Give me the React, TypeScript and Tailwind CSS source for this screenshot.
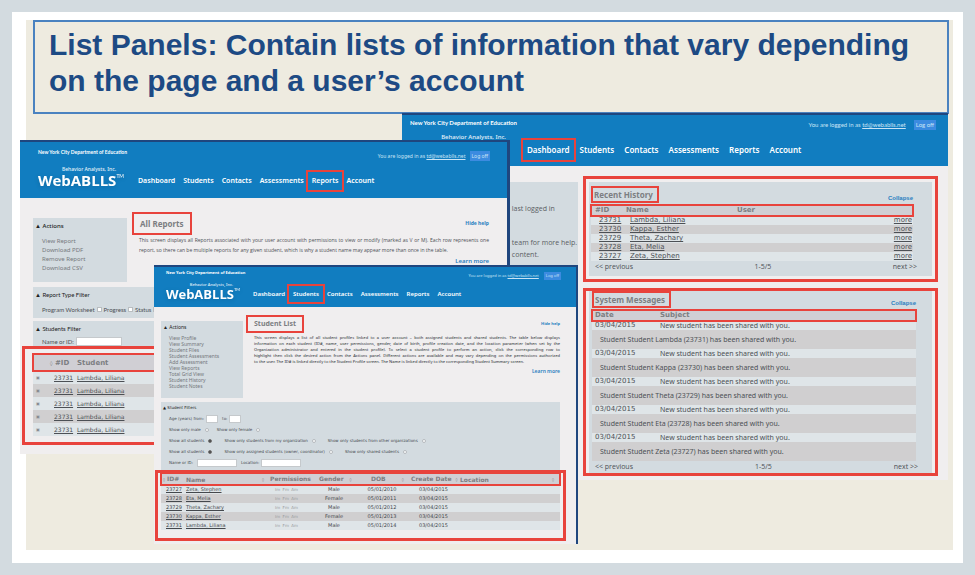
import React from "react";

type HeaderStyle = {
  bar: string;
  org: string;
  login: string;
  logoff: string;
  tagline: string;
  logo: string;
  tm: string;
  brand: string;
  nav: string;
  highlight: string;
};

const NAV = ["Dashboard", "Students", "Contacts", "Assessments", "Reports", "Account"];

function AppHeader({ active, s, showLogo = true }: { active: string; s: HeaderStyle; showLogo?: boolean }) {
  return (
    <header className={"flex flex-col bg-[#117dc0] text-white " + s.bar}>
      <div className="flex items-start justify-between">
        <span className={"font-bold " + s.org}>New York City Department of Education</span>
        <span className={"flex items-center text-[#c9e4f5] " + s.login}>
          <span>
            You are logged in as{" "}
            <a href="#account" className="underline">
              td@webablls.net
            </a>
          </span>
          <button className={"bg-[#3c8be0] " + s.logoff}>Log off</button>
        </span>
      </div>
      <div className="flex flex-1 items-end">
        <div className={"flex flex-col items-end " + s.brand}>
          <span className={"font-['Noto_Sans',sans-serif] font-medium text-[#e3f0f9] " + s.tagline}>Behavior Analysts, Inc.</span>
          {showLogo && (
            <span className={"flex items-start drop-shadow-sm " + s.logo}>
              <b className="font-['Open_Sans',sans-serif] font-bold">WebABLLS</b>
              <sup className={"top-0 font-['Lato',sans-serif] " + s.tm}>TM</sup>
            </span>
          )}
        </div>
        <nav className={"flex items-center font-['Noto_Sans',sans-serif] font-semibold " + s.nav}>
          {NAV.map((n) => (
            <a key={n} href={"#" + n} className={n === active ? "outline-2 outline-[#e8433c] " + s.highlight : ""}>
              {n}
            </a>
          ))}
        </nav>
      </div>
    </header>
  );
}

const dashHeader: HeaderStyle = {
  bar: "h-[53px] border-t-2 border-[#1f467e] pl-2 pr-3",
  org: "pt-1 font-['Lato',sans-serif] text-[6px] leading-[8px]",
  login: "gap-2 pt-[5px] font-['Lato',sans-serif] text-[6px] leading-[10px]",
  logoff: "px-[2px]",
  tagline: "text-[6px] leading-[8px]",
  logo: "text-[16px] leading-[18px]",
  tm: "text-[6px] leading-[8px]",
  brand: "w-[96px] self-start pt-[3px]",
  nav: "gap-[10px] pb-[10px] pl-[21px] text-[8px] leading-[12px]",
  highlight: "outline-offset-[4px]",
};

const reportsHeader: HeaderStyle = {
  bar: "h-[58px] border-t-2 border-[#1f467e] pl-[18px] pr-[17px]",
  org: "pt-[6px] font-['Lato',sans-serif] text-[5px] leading-[8px]",
  login: "gap-1 pt-[9px] font-['Noto_Sans',sans-serif] text-[5px] leading-[10px]",
  logoff: "px-[2px]",
  tagline: "pr-[8px] text-[5px] leading-[6px]",
  logo: "text-[15px] leading-[16px]",
  tm: "text-[5px] leading-[8px]",
  brand: "w-[86px] pb-[10px]",
  nav: "gap-2 pb-[12px] pl-[14px] text-[7px] leading-[10px]",
  highlight: "outline-offset-[4px]",
};

const studentsHeader: HeaderStyle = {
  bar: "h-[42px] border-t-2 border-[#1f467e] pl-3 pr-[15px]",
  org: "pt-[3px] font-['Noto_Sans',sans-serif] text-[4px] leading-[6px]",
  login: "gap-[5px] pt-[5px] font-['Noto_Sans',sans-serif] text-[4px] leading-[8px]",
  logoff: "px-[2px]",
  tagline: "pr-[7px] text-[4px] leading-[5px]",
  logo: "text-[13px] leading-[14px]",
  tm: "text-[4px] leading-[6px]",
  brand: "w-[74px] pb-[6px]",
  nav: "gap-2 pb-[9px] pl-[13px] text-[6px] leading-[8px]",
  highlight: "outline-offset-[4px]",
};

function Pager() {
  return (
    <div className="flex justify-between font-['Open_Sans',sans-serif] text-[7px] leading-[12px] text-[#4c5055]">
      <button>&lt;&lt; previous</button>
      <span>1-5/5</span>
      <button>next &gt;&gt;</button>
    </div>
  );
}

function PanelTitle({ children }: { children: React.ReactNode }) {
  return (
    <div className="flex items-end justify-between">
      <h2 className="border-2 border-[#e8433c] pr-1 pl-[1px] font-['Noto_Sans',sans-serif] text-[8px] leading-[13px] font-bold text-[#7c7e82]">
        {children}
      </h2>
      <button className="font-['Liberation_Sans',sans-serif] text-[6px] leading-[9px] font-bold text-[#2a7fc0]">Collapse</button>
    </div>
  );
}

const students = [
  ["23731", "Lambda, Liliana", "Lambda"],
  ["23730", "Kappa, Esther", "Kappa"],
  ["23729", "Theta, Zachary", "Theta"],
  ["23728", "Eta, Melia", "Eta"],
  ["23727", "Zeta, Stephen", "Zeta"],
];

function DashboardWindow() {
  return (
    <section className="absolute top-0 right-[5px] left-[376px] h-[367px] bg-[#f0eeef]">
      <AppHeader active="Dashboard" s={dashHeader} showLogo={false} />
      <div className="flex">
        <div className="mt-4 ml-4 h-[110px] w-[160px] bg-[#d3dbe0] pt-[21px] pl-[92px] font-['Open_Sans',sans-serif] text-[7px] leading-[12px] whitespace-nowrap text-[#5a5e63]">
          <p className="pb-[22px]">&nbsp;last logged in</p>
          <p>&nbsp;team for more help.</p>
          <p>&nbsp;content.</p>
        </div>
        <div className="mr-[10px] ml-auto flex w-[355px] flex-col gap-[6px] pt-[10px]">
          <div className="border-[3px] border-[#e8433c] p-[3px]">
            <div className="h-[94px] bg-[#d3dbe0] pt-1 pr-[19px] pl-[2px] font-['DejaVu_Sans',sans-serif]">
              <PanelTitle>Recent History</PanelTitle>
              <table className="mt-[2px] w-full table-fixed border-separate border-spacing-0 text-[7px] leading-[9px] text-[#4c5055]">
                <thead>
                  <tr className="bg-[#d0cfd4] text-left font-bold text-[#7c7e82] outline-2 -outline-offset-1 outline-[#e8433c]">
                    <th className="h-[11px] w-[35px] pl-1">#ID</th>
                    <th className="w-[111px]">Name</th>
                    <th>User</th>
                    <th className="w-[30px]"></th>
                  </tr>
                </thead>
                <tbody>
                  {students.map(([id, name]) => (
                    <tr key={id} className="odd:bg-[#dfe5e8] even:bg-[#d0cfd0]">
                      <td className="pl-2 underline">{id}</td>
                      <td className="pl-1 underline">{name}</td>
                      <td></td>
                      <td className="pr-[1px] text-right">
                        <a href={"#" + id} className="underline">
                          more
                        </a>
                      </td>
                    </tr>
                  ))}
                </tbody>
              </table>
              <div className="-mr-1 pl-1">
                <Pager />
              </div>
            </div>
          </div>
          <div className="border-[3px] border-[#e8433c] px-[3px]">
            <div className="h-[182px] bg-[#d3dbe0] pr-4 pl-[3px] font-['DejaVu_Sans',sans-serif]">
              <PanelTitle>System Messages</PanelTitle>
              <table className="mt-[2px] w-full table-fixed border-separate border-spacing-0 text-[7px] leading-[9px] text-[#4c5055]">
                <thead>
                  <tr className="bg-[#d0cfd4] text-left font-bold text-[#7c7e82] outline-2 -outline-offset-1 outline-[#e8433c]">
                    <th className="h-[11px] w-[68px] pl-[3px]">Date</th>
                    <th>Subject</th>
                  </tr>
                </thead>
                <tbody>
                  {students.map(([id, , last]) => (
                    <React.Fragment key={id}>
                      <tr className="bg-[#dfe5e8]">
                        <td className="pl-[3px]">03/04/2015</td>
                        <td className="font-['Noto_Sans',sans-serif]">New student has been shared with you.</td>
                      </tr>
                      <tr className="bg-[#d0cfd0]">
                        <td colSpan={2} className="h-[19px] pl-2 font-['Noto_Sans',sans-serif]">
                          Student Student {last} ({id}) has been shared with you.
                        </td>
                      </tr>
                    </React.Fragment>
                  ))}
                </tbody>
              </table>
              <div className="-mr-[2px] pl-[3px]">
                <Pager />
              </div>
            </div>
          </div>
        </div>
      </div>
    </section>
  );
}

function ReportsWindow() {
  return (
    <section className="absolute top-[27px] left-[-6px] h-[314px] w-[490px] border-r-[3px] border-[#1f467e] bg-[#f0eeef] font-['Noto_Sans',sans-serif] text-[6px] text-[#4c5055]">
      <AppHeader active="Reports" s={reportsHeader} />
      <div className="flex pr-[18px] pl-[13px]">
        <aside className="mt-5 h-[64px] w-[94px] bg-[#d3dbe0] pt-1">
          <h3 className="pl-[2px] leading-[9px] font-medium text-[#222]">▲ Actions</h3>
          <ul className="pt-[6px] pl-[9px] leading-[9px] text-[#75797d]">
            <li>View Report</li>
            <li>Download PDF</li>
            <li>Remove Report</li>
            <li>Download CSV</li>
          </ul>
        </aside>
        <div className="flex flex-1 flex-col pt-[14px] pl-[5px]">
          <div className="flex items-center justify-between">
            <h2 className="border-2 border-[#e8433c] px-[6px] text-[8px] leading-[19px] font-bold text-[#7c7e82]">All Reports</h2>
            <button className="text-[5px] font-bold text-[#2a7fc0]">Hide help</button>
          </div>
          <p className="pl-[7px] text-justify font-['Open_Sans',sans-serif] text-[5px] leading-[10px] font-medium">
            This screen displays all Reports associated with your user account with permissions to view or modify (marked as V or M). Each row
            represents one report, so there can be multiple reports for any given student, which is why a student name may appear more than once
            in the table.
          </p>
          <a href="#help" className="self-end text-[6px] leading-[12px] font-semibold text-[#2a7fc0]">
            Learn more
          </a>
        </div>
      </div>
      <div className="mx-[13px] mt-[5px] h-[31px] bg-[#d3dbe0] pt-[3px]">
        <h3 className="pl-[2px] font-['Lato',sans-serif] leading-[9px] text-[#222]">▲ Report Type Filter</h3>
        <div className="flex gap-[2px] pt-[6px] pl-[9px] font-['Lato',sans-serif] leading-[9px]">
          {["Program Worksheet", "Progress", "Status"].map((l) => (
            <label key={l} className="flex items-center gap-[2px]">
              {l}
              <input type="checkbox" className="size-[5px] appearance-none border border-[#b9bdc0] bg-white" />
            </label>
          ))}
        </div>
      </div>
      <div className="mx-[13px] mt-[3px] h-[25px] bg-[#d3dbe0] pt-[3px]">
        <h3 className="pl-[2px] font-['Lato',sans-serif] leading-[9px] text-[#222]">▲ Students Filter</h3>
        <label className="flex items-center gap-[2px] pt-[4px] pl-[9px] font-['Lato',sans-serif] leading-[9px]">
          Name or ID:
          <input className="h-[9px] w-[46px] border border-[#c5c9cc] bg-white" />
        </label>
      </div>
      <div className="ml-[2px] border-[3px] border-[#e8433c] pt-[5px] pb-[6px] pl-2 font-['DejaVu_Sans',sans-serif]">
        <table className="w-full table-fixed border-separate border-spacing-0 text-[6px] leading-[12px]">
          <thead>
            <tr className="bg-[#d0cfd4] text-left text-[7px] font-bold text-[#7c7e82] outline-2 -outline-offset-1 outline-[#e8433c]">
              <th className="h-[17px] w-[17px]"></th>
              <th className="w-[27px]">
                <span className="text-[5px]">◊</span> #ID
              </th>
              <th>Student</th>
            </tr>
          </thead>
          <tbody>
            {[0, 1, 2, 3, 4].map((i) => (
              <tr key={i} className="odd:bg-[#dfe5e8] even:bg-[#d0cfd0]">
                <td className="h-[13px] pl-[3px] text-[4px] text-[#85898d]">▣</td>
                <td className="pl-1 underline">23731</td>
                <td className="underline">Lambda, Liliana</td>
              </tr>
            ))}
          </tbody>
        </table>
      </div>
    </section>
  );
}

function Radio({ label, name, on = false }: { label: string; name: string; on?: boolean }) {
  return (
    <label className="flex items-center gap-1">
      {label}
      <input
        type="radio"
        name={name}
        defaultChecked={on}
        className="size-[4px] appearance-none rounded-full border border-[#b5b9bd] bg-white checked:border-[#777] checked:bg-[#444]"
      />
    </label>
  );
}

const roster = [
  ["23727", "Zeta, Stephen", "Male", "05/01/2010"],
  ["23728", "Eta, Melia", "Female", "05/01/2011"],
  ["23729", "Theta, Zachary", "Male", "05/01/2012"],
  ["23730", "Kappa, Esther", "Female", "05/01/2013"],
  ["23731", "Lambda, Liliana", "Male", "05/01/2014"],
];

const helpLines = [
  "This screen displays a list of all student profiles linked to a user account – both assigned students and shared students. The table below displays",
  "information on each student (ID#, name, user permissions, gender, date of birth, profile creation date, and the location parameter (when set by the",
  "Organization administrator and entered in the student profile). To select a student profile to perform an action, click the corresponding row to",
  "highlight then click the desired action from the Actions panel. Different actions are available and may vary depending on the permissions authorized",
];

const actions = [
  "View Profile",
  "View Summary",
  "Student Files",
  "Student Assessments",
  "Add Assessment",
  "View Reports",
  "Total Grid View",
  "Student History",
  "Student Notes",
];

function StudentsWindow() {
  return (
    <section className="absolute top-[152px] left-[128px] h-[279px] w-[424px] border-r-2 border-[#1f467e] bg-[#f0eeef] font-['DejaVu_Sans',sans-serif] text-[5px] text-[#44484d]">
      <AppHeader active="Students" s={studentsHeader} />
      <div className="flex pr-4 pl-[7px]">
        <aside className="mt-[14px] h-[77px] w-[82px] bg-[#d3dbe0] pt-[3px] font-['Noto_Sans',sans-serif]">
          <h3 className="pl-[2px] leading-[7px] text-[#222]">▲ Actions</h3>
          <ul className="pt-1 pl-2 leading-[6px] text-[#75797d]">
            {actions.map((a) => (
              <li key={a}>{a}</li>
            ))}
          </ul>
        </aside>
        <div className="flex flex-1 flex-col pt-2 pl-[3px] font-['Noto_Sans',sans-serif]">
          <div className="flex items-center justify-between">
            <h2 className="border-2 border-[#e8433c] px-[6px] text-[7px] leading-[14px] font-bold text-[#7c7e82]">Student List</h2>
            <button className="text-[4px] font-bold text-[#2a7fc0]">Hide help</button>
          </div>
          <p className="pt-[2px] pl-2 text-[4px] leading-[6px] font-medium">
            {helpLines.map((line) => (
              <span key={line} className="block text-justify [text-align-last:justify]">
                {line}
              </span>
            ))}
            to the user. The ID# is linked directly to the Student Profile screen. The Name is linked directly to the corresponding Student Summary
            screen.
          </p>
          <a href="#help" className="self-end pt-[2px] text-[5px] leading-[9px] font-semibold text-[#2a7fc0]">
            Learn more
          </a>
        </div>
      </div>
      <form className="mt-1 mr-4 ml-[7px] h-[68px] bg-[#d3dbe0] pt-[3px] text-[4px]">
        <h3 className="pl-[2px] leading-[6px] text-[#222]">▲ Student Filters</h3>
        <div className="flex flex-col gap-[3px] pt-1 pl-2 leading-[8px]">
          <div className="flex gap-1">
            <label className="flex items-center gap-[2px]">
              Age (years) from:
              <input className="h-[8px] w-[12px] border border-[#c5c9cc] bg-white" />
            </label>
            <label className="flex items-center gap-[2px]">
              to:
              <input className="h-[8px] w-[12px] border border-[#c5c9cc] bg-white" />
            </label>
          </div>
          <div className="flex gap-2">
            <Radio label="Show only male" name="gender" />
            <Radio label="Show only female" name="gender" />
          </div>
          <div className="flex gap-3">
            <Radio label="Show all students" name="org" on />
            <Radio label="Show only students from my organization" name="org" />
            <Radio label="Show only students from other organizations" name="org" />
          </div>
          <div className="flex gap-3">
            <Radio label="Show all students" name="assigned" on />
            <Radio label="Show only assigned students (owner, coordinator)" name="assigned" />
            <Radio label="Show only shared students" name="assigned" />
          </div>
          <div className="flex gap-1">
            <label className="flex items-center gap-1">
              Name or ID:
              <input className="h-[8px] w-[40px] border border-[#c5c9cc] bg-white" />
            </label>
            <label className="flex items-center gap-[2px]">
              Location:
              <input className="h-[8px] w-[40px] border border-[#c5c9cc] bg-white" />
            </label>
          </div>
        </div>
      </form>
      <div className="mr-[10px] ml-[1px] h-[71px] border-[3px] border-[#e8433c] px-[3px]">
        <table className="w-full table-fixed border-separate border-spacing-0 text-[5px] leading-[7px]">
          <thead>
            <tr className="bg-[#d0cfd4] text-left text-[6px] font-bold text-[#7c7e82] outline-2 -outline-offset-1 outline-[#e8433c]">
              <th className="h-[12px] w-[25px] pl-[2px] whitespace-nowrap">
                <span className="text-[4px]">◊</span> ID#
              </th>
              <th className="w-[76px]">Name</th>
              <th className="w-[57px] whitespace-nowrap">
                <span className="pr-[6px] text-[4px]">◊</span>Permissions
              </th>
              <th className="w-[38px] whitespace-nowrap">
                Gender<span className="pl-[6px] text-[4px]">◊</span>
              </th>
              <th className="w-[50px] pl-[14px] whitespace-nowrap">
                DOB<span className="pl-4 text-[4px]">◊</span>
              </th>
              <th className="w-[53px] pl-1 whitespace-nowrap">
                Create Date<span className="pl-1 text-[4px]">◊</span>
              </th>
              <th>Location</th>
              <th className="w-[8px] text-[4px]">◊</th>
            </tr>
          </thead>
          <tbody>
            {roster.map(([id, name, gender, dob]) => (
              <tr key={id} className="odd:bg-[#dfe5e8] even:bg-[#d0cfd0]">
                <td className="h-[9px] pl-[5px] underline">{id}</td>
                <td className="underline">{name}</td>
                <td className="pl-[13px] text-[4px] whitespace-nowrap text-[#96999c]">Im&nbsp; Fm&nbsp; Am</td>
                <td className="pr-2 text-center">{gender}</td>
                <td className="text-center">{dob}</td>
                <td className="pl-3">03/04/2015</td>
                <td></td>
                <td></td>
              </tr>
            ))}
          </tbody>
        </table>
      </div>
    </section>
  );
}

export default function App() {
  return (
    <main className="flex min-h-screen bg-[#d3dbe0] p-3">
      <div className="flex flex-1 bg-white pt-2 pr-[10px] pb-[13px] pl-[14px]">
        <div className="flex flex-1 flex-col bg-[#eeebe0]">
          <h1 className="mr-[4px] ml-[7px] h-[94px] border-2 border-[#4a82c0] px-[14px] pt-[5px] font-['Liberation_Sans',sans-serif] text-[30px] leading-[36px] font-bold text-[#1d4a84]">
            List Panels: Contain lists of information that vary depending on the page and a user’s account
          </h1>
          <div className="relative -mt-[1px] flex-1">
            <DashboardWindow />
            <ReportsWindow />
            <StudentsWindow />
          </div>
        </div>
      </div>
    </main>
  );
}
